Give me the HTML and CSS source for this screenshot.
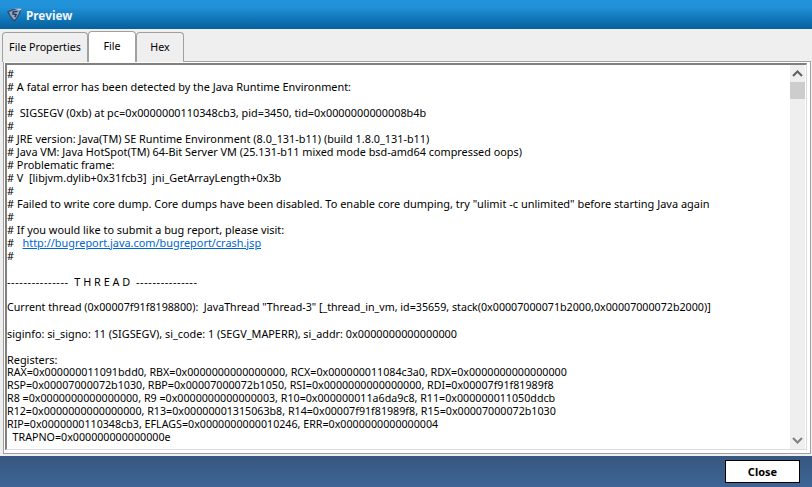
FILE: index.html
```html
<!DOCTYPE html>
<html lang="en">
<head>
<meta charset="utf-8">
<title>Preview</title>
<link rel="stylesheet" href="styles.css">
</head>
<body>
<div class="window">
  <header class="titlebar">
    <svg class="logo" width="15" height="14" viewBox="0 0 15 14">
      <path d="M0 3.5 L6 1 L14.5 0.5 L13 6 L8 13.5 L6 13 L2.5 8 Z" fill="#34496c"/>
      <path d="M2 4 L6.5 2.2 L13 1.8 L11.8 5.5 L7.8 11.8 L6.5 11.2 L3.6 7.5 Z" fill="#8ea4c0"/>
      <path d="M10.5 3.4 L6.2 3.8 L6 6 L9 6.6 L8 9" fill="none" stroke="#1f3553" stroke-width="1.4"/>
      <path d="M7 0.8 L14.5 0.5 L14 2.2 L10 1.8 Z" fill="#c8d4e2"/>
    </svg>
    <span class="title">Preview</span>
  </header>
  <div class="content">
    <nav class="tabs">
      <div class="tab props">File Properties</div>
      <div class="tab active">File</div>
      <div class="tab hex">Hex</div>
    </nav>
    <div class="panel">
      <div class="viewer">
        <div class="text">
<div class="l">#</div>
<div class="l"># A fatal error has been detected by the Java Runtime Environment:</div>
<div class="l">#</div>
<div class="l mix">#&nbsp; SIGSEGV (0xb) at pc=0x0000000110348cb3, pid=3450, tid=0x0000000000008b4b</div>
<div class="l">#</div>
<div class="l mix"># JRE version: Java(TM) SE Runtime Environment (8.0_131-b11) (build 1.8.0_131-b11)</div>
<div class="l mix"># Java VM: Java HotSpot(TM) 64-Bit Server VM (25.131-b11 mixed mode bsd-amd64 compressed oops)</div>
<div class="l"># Problematic frame:</div>
<div class="l mix"># V&nbsp; [libjvm.dylib+0x31fcb3]&nbsp; jni_GetArrayLength+0x3b</div>
<div class="l">#</div>
<div class="l wide"># Failed to write core dump. Core dumps have been disabled. To enable core dumping, try "ulimit -c unlimited" before starting Java again</div>
<div class="l">#</div>
<div class="l"># If you would like to submit a bug report, please visit:</div>
<div class="l">#&nbsp;&nbsp; <a class="link" href="#">http://bugreport.java.com/bugreport/crash.jsp</a></div>
<div class="l">#</div>
<div class="l">&nbsp;</div>
<div class="l"><span class="dash">---------------</span>&nbsp; <span class="spaced">T H R E A D</span>&nbsp; <span class="dash">---------------</span></div>
<div class="l">&nbsp;</div>
<div class="l num">Current thread (0x00007f91f8198800):&nbsp; JavaThread "Thread-3" [_thread_in_vm, id=35659, stack(0x00007000071b2000,0x00007000072b2000)]</div>
<div class="l">&nbsp;</div>
<div class="l mix">siginfo: si_signo: 11 (SIGSEGV), si_code: 1 (SEGV_MAPERR), si_addr: 0x0000000000000000</div>
<div class="l">&nbsp;</div>
<div class="l">Registers:</div>
<div class="l num">RAX=0x000000011091bdd0, RBX=0x0000000000000000, RCX=0x000000011084c3a0, RDX=0x0000000000000000</div>
<div class="l num">RSP=0x00007000072b1030, RBP=0x00007000072b1050, RSI=0x0000000000000000, RDI=0x00007f91f81989f8</div>
<div class="l num">R8 =0x0000000000000000, R9 =0x0000000000000003, R10=0x000000011a6da9c8, R11=0x000000011050ddcb</div>
<div class="l num">R12=0x0000000000000000, R13=0x00000001315063b8, R14=0x00007f91f81989f8, R15=0x00007000072b1030</div>
<div class="l num">RIP=0x0000000110348cb3, EFLAGS=0x0000000000010246, ERR=0x0000000000000004</div>
<div class="l num">&nbsp; TRAPNO=0x000000000000000e</div>
        </div>
        <div class="scrollbar">
          <svg class="arrow" width="15" height="17" viewBox="0 0 15 17"><path d="M3 11 L7.5 6.5 L12 11" fill="none" stroke="#606060" stroke-width="2"/></svg>
          <div class="track"><div class="thumb"></div></div>
          <svg class="arrow" width="15" height="17" viewBox="0 0 15 17"><path d="M3 6 L7.5 10.5 L12 6" fill="none" stroke="#808080" stroke-width="2"/></svg>
        </div>
      </div>
    </div>
  </div>
  <footer class="footer">
    <button class="close" type="button">Close</button>
  </footer>
</div>
</body>
</html>
```
FILE: styles.css
```css
html, body { margin: 0; padding: 0; height: 100%; overflow: hidden; }
body { font-family: "Noto Sans", "Open Sans", sans-serif; color: #000; }
.window { display: flex; flex-direction: column; width: 812px; height: 487px; background: #efefef; }
.titlebar {
  height: 29px; flex: none; display: flex; align-items: center; gap: 4px; padding-left: 7px;
  background: linear-gradient(#2294dc 0%, #2191d8 25%, #0c6fb0 75%, #075f9b 100%);
}
.title { color: #eef3f8; font-size: 11.8px; font-weight: 700; }
.content { flex: 1; display: flex; flex-direction: column; padding: 2px 1px 2px 3px; min-height: 0; background: #efefef; }
.tabs { display: flex; height: 31px; flex: none; position: relative; z-index: 1; margin-left: -1px; }
.tab {
  box-sizing: border-box; height: 30px; display: flex; align-items: center; justify-content: center; white-space: nowrap; padding-bottom: 2px;
  font-size: 10.7px; background: #efefef; border: 1px solid #a0a0a0; border-bottom: none; border-radius: 4px 4px 0 0; margin-top: 1px;
}
.tab.props { width: 86px; }
.tab.active { background: #fff; width: 48px; height: 31px; margin-top: 0; }
.tab.hex { width: 48px; }
.panel { flex: 1; border: 1px solid #a0a0a0; padding: 1px 3px 3px 1px; min-height: 0; display: flex; background: #fff; margin-top: -1px; }
.viewer { flex: 1; display: flex; min-height: 0; border: 2px solid #808080; border-right: 1px solid #dcdcdc; border-bottom: 1px solid #dcdcdc; background: #fff; }
.text { flex: 1; padding: 2px 0 0 0; font-size: 10.9px; line-height: 13px; white-space: nowrap; overflow: hidden; }
.l.wide { font-size: 10.97px; }
.l.mix { font-size: 10.85px; }
.l.num { font-size: 10.7px; }
.dash { letter-spacing: 0.6px; }
.spaced { letter-spacing: 0; }
.link { color: #0066cc; text-decoration: underline; }
.scrollbar { width: 15px; flex: none; display: flex; flex-direction: column; background: #efefef; margin-right: 1px; }
.arrow { width: 15px; height: 17px; flex: none; }
.track { flex: 1; }
.thumb { height: 17px; background: #cdcdcd; }
.footer { height: 31px; flex: none; display: flex; justify-content: flex-end; align-items: center; padding-right: 12px; background: linear-gradient(#36577f, #3e6596); }
.close { width: 75px; height: 23px; background: #fff; border: 1px solid #000; font: 700 11px "Noto Sans", sans-serif; color: #000; padding: 0; }
```
